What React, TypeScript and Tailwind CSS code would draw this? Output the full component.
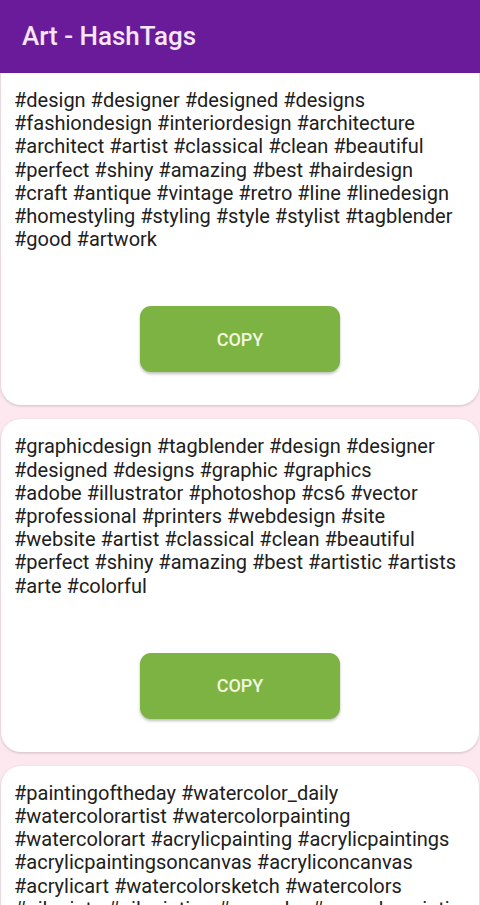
import React from "react";

const cards = [
  [
    "#design #designer #designed #designs",
    "#fashiondesign #interiordesign #architecture",
    "#architect #artist #classical #clean #beautiful",
    "#perfect #shiny #amazing #best #hairdesign",
    "#craft #antique #vintage #retro #line #linedesign",
    "#homestyling #styling #style #stylist #tagblender",
    "#good #artwork",
  ],
  [
    "#graphicdesign #tagblender #design #designer",
    "#designed #designs #graphic #graphics",
    "#adobe #illustrator #photoshop #cs6 #vector",
    "#professional #printers #webdesign #site",
    "#website #artist #classical #clean #beautiful",
    "#perfect #shiny #amazing #best #artistic #artists",
    "#arte #colorful",
  ],
  [
    "#paintingoftheday #watercolor_daily",
    "#watercolorartist #watercolorpainting",
    "#watercolorart #acrylicpainting #acrylicpaintings",
    "#acrylicpaintingsoncanvas #acryliconcanvas",
    "#acrylicart #watercolorsketch #watercolors",
    "#oilpaints #oilpainting #gouache #gouachepainting",
    "#canvas #art",
  ],
];

export default function App() {
  return (
    <div className="w-[480px] h-[905px] overflow-hidden bg-[#fce8ee]" style={{ fontFamily: "Roboto, 'Noto Sans', sans-serif" }}>
      <div className="h-[73px] bg-[#6a1b9a] flex items-center pl-[22px] shadow-md">
        <h1 className="text-[26px] font-medium text-[#f6e6f8]">Art - HashTags</h1>
      </div>
      <div className="flex flex-col gap-[14px] px-[1px]">
        {cards.map((lines, i) => (
          <div key={i} className="bg-white rounded-[20px] shadow-[0_1px_3px_rgba(0,0,0,0.18)] pt-[16px] pb-[33px] pl-[13px] pr-[4px] first:rounded-t-none">
            <p className="text-[20px] leading-[23.2px] text-[#202020]">
              {lines.map((l, j) => (
                <span key={j} className="block whitespace-nowrap">{l}</span>
              ))}
            </p>
            <div className="flex justify-center mt-[55px] -ml-[9px]">
              <button className="w-[200px] h-[66px] rounded-[11px] bg-[#7cb342] text-[#f1f8e0] text-[18px] font-medium shadow-[0_2px_3px_rgba(0,0,0,0.25)]">
                COPY
              </button>
            </div>
          </div>
        ))}
      </div>
    </div>
  );
}
